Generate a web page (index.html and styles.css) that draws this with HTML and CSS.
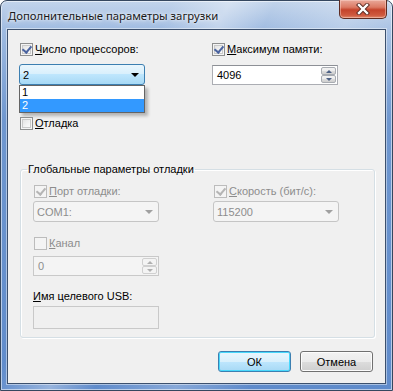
FILE: index.html
```html
<!DOCTYPE html>
<html lang="ru">
<head>
    <meta charset="utf-8">
    <title>Дополнительные параметры загрузки</title>
    <link rel="stylesheet" href="styles.css">
</head>
<body>

<div class="window">
    <div class="titleBar">
        <span class="title">Дополнительные параметры загрузки</span>
        <span class="closeBtn">
            <svg width="18" height="12" viewBox="0 0 18 12">
                <path d="M5 2 L13 10 M13 2 L5 10" stroke="#5a2a22" stroke-width="4.2" stroke-linecap="square"/>
                <path d="M5 2 L13 10 M13 2 L5 10" stroke="#fff" stroke-width="2.4" stroke-linecap="square"/>
            </svg>
        </span>
    </div>

    <div class="client">
        <div class="topRow">
            <div class="colLeft">
                <div class="check">
                    <span class="box checked"></span>
                    <span><u>Ч</u>исло процессоров:</span>
                </div>
                <div class="combo comboOpen">
                    <span>2</span>
                    <span class="arrow"></span>
                    <ul class="dropList">
                        <li>1</li>
                        <li class="selected">2</li>
                    </ul>
                </div>
                <div class="check debugCheck">
                    <span class="box"></span>
                    <span><u>О</u>тладка</span>
                </div>
            </div>
            <div class="colRight">
                <div class="check">
                    <span class="box checked"></span>
                    <span><u>М</u>аксимум памяти:</span>
                </div>
                <div class="spin memSpin">
                    <span class="spinText">4096</span>
                    <span class="spinButtons">
                        <span class="spinUp"><i></i></span>
                        <span class="spinDown"><i></i></span>
                    </span>
                </div>
            </div>
        </div>

        <fieldset class="group">
            <legend>Глобальные параметры отладки</legend>
            <div class="groupRow">
                <div class="groupCol">
                    <div class="check disabled">
                        <span class="box checked"></span>
                        <span><u>П</u>орт отладки:</span>
                    </div>
                    <div class="combo comboDisabled">
                        <span>COM1:</span>
                        <span class="arrow"></span>
                    </div>
                </div>
                <div class="groupCol">
                    <div class="check disabled">
                        <span class="box checked"></span>
                        <span><u>С</u>корость (бит/с):</span>
                    </div>
                    <div class="combo comboDisabled">
                        <span>115200</span>
                        <span class="arrow"></span>
                    </div>
                </div>
            </div>
            <div class="check disabled channelCheck">
                <span class="box"></span>
                <span><u>К</u>анал</span>
            </div>
            <div class="spin spinDisabled">
                <span class="spinText">0</span>
                <span class="spinButtons">
                    <span class="spinUp"><i></i></span>
                    <span class="spinDown"><i></i></span>
                </span>
            </div>
            <div class="usbLabel"><u>И</u>мя целевого USB:</div>
            <div class="usbInput"></div>
        </fieldset>

        <div class="buttons">
            <span class="btn btnDefault">ОК</span>
            <span class="btn">Отмена</span>
        </div>
    </div>
</div>

</body>
</html>
```

FILE: styles.css
```css
* {
    box-sizing: border-box;
}

body {
    margin: 0;
    background: #fff;
    font-family: "Liberation Sans", Arial, sans-serif;
    font-size: 11px;
    color: #000;
}

u {
    text-decoration: underline;
    text-underline-offset: 1px;
}

/* window frame */

.window {
    width: 393px;
    height: 391px;
    border: 1px solid #35475f;
    border-radius: 7px 7px 0 0;
    background:
        linear-gradient(115deg, rgba(255, 255, 255, 0) 30%, rgba(255, 255, 255, 0.35) 40%, rgba(255, 255, 255, 0) 48%, rgba(255, 255, 255, 0.25) 62%, rgba(255, 255, 255, 0) 75%),
        linear-gradient(180deg, #c2d4eb 0px, #9fbbe1 30px, #6f97cf 120px, #5f8bcb 391px);
    box-shadow: inset 0 0 0 1px rgba(255, 255, 255, 0.55);
    padding: 0 6px 6px 6px;
    display: flex;
    flex-direction: column;
}

.titleBar {
    height: 28px;
    display: flex;
    align-items: flex-start;
    justify-content: space-between;
}

.title {
    margin: 7px 0 0 1px;
    font-family: "Noto Sans", "Open Sans", sans-serif;
    font-size: 11.3px;
    color: #1a1a1a;
    white-space: nowrap;
    text-shadow: 0 0 6px rgba(255, 255, 255, 0.9), 0 0 3px rgba(255, 255, 255, 0.9);
}

.closeBtn {
    width: 48px;
    height: 19px;
    margin: -1px -1px 0 0;
    border: 1px solid #5e2c22;
    border-top: none;
    border-radius: 0 0 5px 5px;
    background: linear-gradient(180deg, #e9a99a 0%, #dc7a64 40%, #c4432b 55%, #cf5a3f 85%, #e08a6d 100%);
    box-shadow: inset 0 0 0 1px rgba(255, 220, 210, 0.45);
    display: flex;
    align-items: center;
    justify-content: center;
}

.client {
    flex: 1;
    background: #f0f0f0;
    border: 1px solid #3c506d;
    box-shadow: 0 0 0 1px rgba(255, 255, 255, 0.45);
    padding: 13px 10px 0 11px;
    display: flex;
    flex-direction: column;
}

/* checkboxes */

.check {
    display: flex;
    align-items: center;
    height: 13px;
    line-height: 13px;
    gap: 2px;
    white-space: nowrap;
}

.box {
    flex: none;
    width: 13px;
    height: 13px;
    margin-left: 1px;
    border: 1px solid #8e8f8f;
    background: linear-gradient(135deg, #dcdcdc 0%, #f4f4f4 60%, #ffffff 100%);
    box-shadow: inset 0 0 0 1px #f4f4f4, inset 0 0 0 2px #c9c9c9;
    position: relative;
}

.box.checked::after {
    content: "";
    position: absolute;
    left: 3px;
    top: 0px;
    width: 4px;
    height: 7px;
    border: solid #4b64a0;
    border-width: 0 2px 2px 0;
    transform: rotate(40deg);
}

.disabled {
    color: #8d8d8d;
}

.disabled .box {
    border-color: #bcbcbc;
    background: #f4f4f4;
    box-shadow: none;
}

.disabled .box.checked::after {
    border-color: #b5b5b5;
}

/* top part */

.topRow {
    display: grid;
    grid-template-columns: 193px 126px;
}

.combo {
    width: 126px;
    height: 21px;
    border: 1px solid #707070;
    border-radius: 3px;
    padding: 0 0 0 3px;
    display: flex;
    align-items: center;
    justify-content: space-between;
    position: relative;
}

.comboOpen {
    margin-top: 8px;
    border-color: #3c7fb1;
    background: linear-gradient(180deg, #eaf6fd 0%, #d9f0fc 45%, #bee6fd 50%, #a7d9f5 100%);
}

.arrow {
    width: 0;
    height: 0;
    margin-right: 5px;
    border-left: 4px solid transparent;
    border-right: 4px solid transparent;
    border-top: 4px solid #000;
}

.dropList {
    position: absolute;
    left: -1px;
    top: 20px;
    width: 126px;
    margin: 0;
    padding: 0;
    list-style: none;
    background: #fff;
    border: 1px solid #646464;
    box-shadow: 3px 3px 3px rgba(0, 0, 0, 0.25);
    line-height: 13px;
}

.dropList li {
    padding-left: 2px;
    height: 13px;
}

.dropList .selected {
    background: #3399ff;
    color: #fff;
}

.debugCheck {
    margin-top: 32px;
}

.colRight .check {
    margin-left: -1px;
}

.spin {
    width: 126px;
    height: 20px;
    border: 1px solid #abadb3;
    border-top-color: #8d9096;
    background: #fff;
    display: flex;
    justify-content: space-between;
    padding-left: 4px;
}

.memSpin {
    margin-top: 9px;
}

.spinText {
    line-height: 18px;
}

.spinButtons {
    width: 17px;
    display: flex;
    flex-direction: column;
    padding: 1px;
    gap: 0;
}

.spinUp, .spinDown {
    flex: 1;
    border: 1px solid #a8acb2;
    border-radius: 2px;
    background: linear-gradient(180deg, #f3f3f3 0%, #ebebeb 50%, #dddddd 51%, #cfcfcf 100%);
    display: flex;
    align-items: center;
    justify-content: center;
}

.spinUp i, .spinDown i {
    width: 0;
    height: 0;
    border-left: 3px solid transparent;
    border-right: 3px solid transparent;
}

.spinUp i {
    border-bottom: 3px solid #4d6185;
}

.spinDown i {
    border-top: 3px solid #4d6185;
}

/* debug group */

.group {
    margin: 32px 0 0 1px;
    padding: 9px 0 0 12px;
    width: 355px;
    height: 176px;
    border: 1px solid #d5dfe5;
    border-radius: 3px;
    box-shadow: inset 1px 1px 0 #fff, 1px 1px 0 #fff;
}

.group legend {
    padding: 0 1px;
    margin-left: -6px;
    line-height: 14px;
}

.groupRow {
    display: grid;
    grid-template-columns: 180px 126px;
}

.groupRow .combo {
    margin-top: 3px;
}

.comboDisabled {
    border-color: #c5c5c5;
    background: #f4f4f4;
    color: #8d8d8d;
}

.comboDisabled .arrow {
    border-top-color: #a0a0a0;
}

.channelCheck {
    margin-top: 15px;
}

.spinDisabled {
    margin-top: 6px;
    border-color: #c9c9c9;
    background: #f4f4f4;
    color: #8d8d8d;
}

.spinDisabled .spinUp, .spinDisabled .spinDown {
    border-color: #d0d0d0;
    background: #f4f4f4;
}

.spinDisabled .spinUp i {
    border-bottom-color: #b0b0b0;
}

.spinDisabled .spinDown i {
    border-top-color: #b0b0b0;
}

.usbLabel {
    margin-top: 14px;
    line-height: 13px;
}

.usbInput {
    width: 126px;
    height: 23px;
    margin-top: 3px;
    border: 1px solid #c9c9c9;
    background: #f0f0f0;
}

/* buttons */

.buttons {
    margin-top: 13px;
    display: flex;
    justify-content: flex-end;
    gap: 9px;
    padding-right: 2px;
}

.btn {
    width: 73px;
    height: 21px;
    border: 1px solid #707070;
    border-radius: 3px;
    background: linear-gradient(180deg, #f2f2f2 0%, #ebebeb 50%, #dddddd 51%, #cfcfcf 100%);
    box-shadow: inset 0 0 0 1px #fcfcfc;
    display: flex;
    align-items: center;
    justify-content: center;
}

.btnDefault {
    border-color: #3c7fb1;
    background: linear-gradient(180deg, #eaf6fd 0%, #d9f0fc 50%, #bee6fd 51%, #a7d9f5 100%);
    box-shadow: inset 0 0 0 1px #48d8fb;
}
```
